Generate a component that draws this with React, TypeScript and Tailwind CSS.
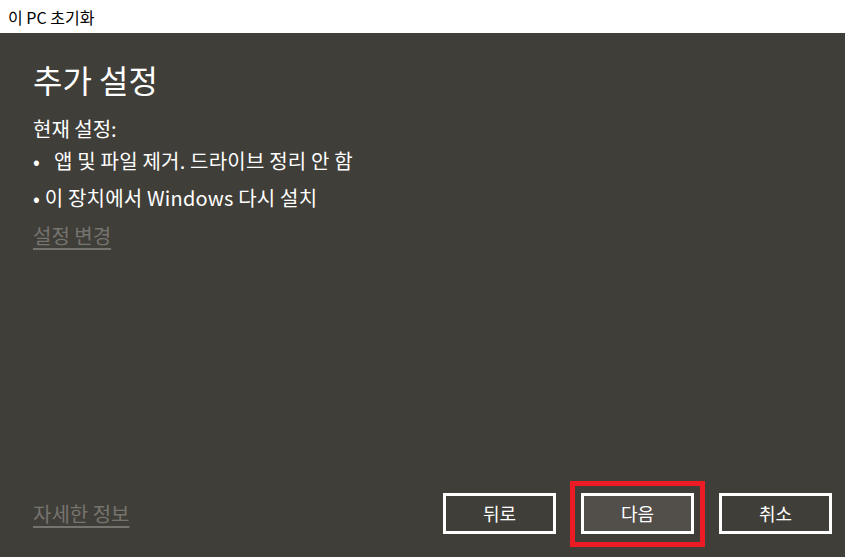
import React from "react";

const font = { fontFamily: '"Noto Sans CJK KR", "Noto Sans", sans-serif' };

export default function App() {
  return (
    <div className="flex h-[557px] w-[845px] flex-col overflow-hidden" style={font}>
      <div className="flex h-[33px] items-center bg-white pl-[8px] text-[16px] text-black">
        이 PC 초기화
      </div>

      <div className="flex flex-1 flex-col bg-[#403e39] pl-[33px] pr-[13px] pb-[23px] text-white">
        <div className="mt-[24px] text-[32px] leading-[44px]">추가 설정</div>

        <div className="mt-[14px] text-[20px] leading-[28px]">현재 설정:</div>
        <div className="mt-[4px] flex text-[20px] leading-[28px] tracking-[0.2px]">
          <span className="w-[21px]">•</span>
          <span>앱 및 파일 제거. 드라이브 정리 안 함</span>
        </div>
        <div className="mt-[9px] text-[20px] leading-[28px] tracking-[0.2px]">• 이 장치에서 Windows 다시 설치</div>
        <div className="mt-[10px] text-[20px] leading-[28px]">
          <span className="text-[#76746f] underline decoration-[#76746f] underline-offset-[4px]">설정 변경</span>
        </div>

        <div className="mt-auto flex items-center justify-between">
          <span className="text-[20px] leading-[28px] text-[#76746f] underline decoration-[#76746f] underline-offset-[4px]">
            자세한 정보
          </span>
          <div className="flex gap-[25px]">
            <button className="h-[41px] w-[113px] border-[3px] border-white text-[18px] text-white">뒤로</button>
            <div className="relative">
              <button className="h-[41px] w-[113px] border-[3px] border-white bg-[#524e4a] text-[18px] text-white">다음</button>
              <div className="pointer-events-none absolute -left-[11px] -right-[11px] -top-[12px] -bottom-[13px] border-[5px] border-[#ed1c24]" />
            </div>
            <button className="h-[41px] w-[113px] border-[3px] border-white text-[18px] text-white">취소</button>
          </div>
        </div>
      </div>
    </div>
  );
}
